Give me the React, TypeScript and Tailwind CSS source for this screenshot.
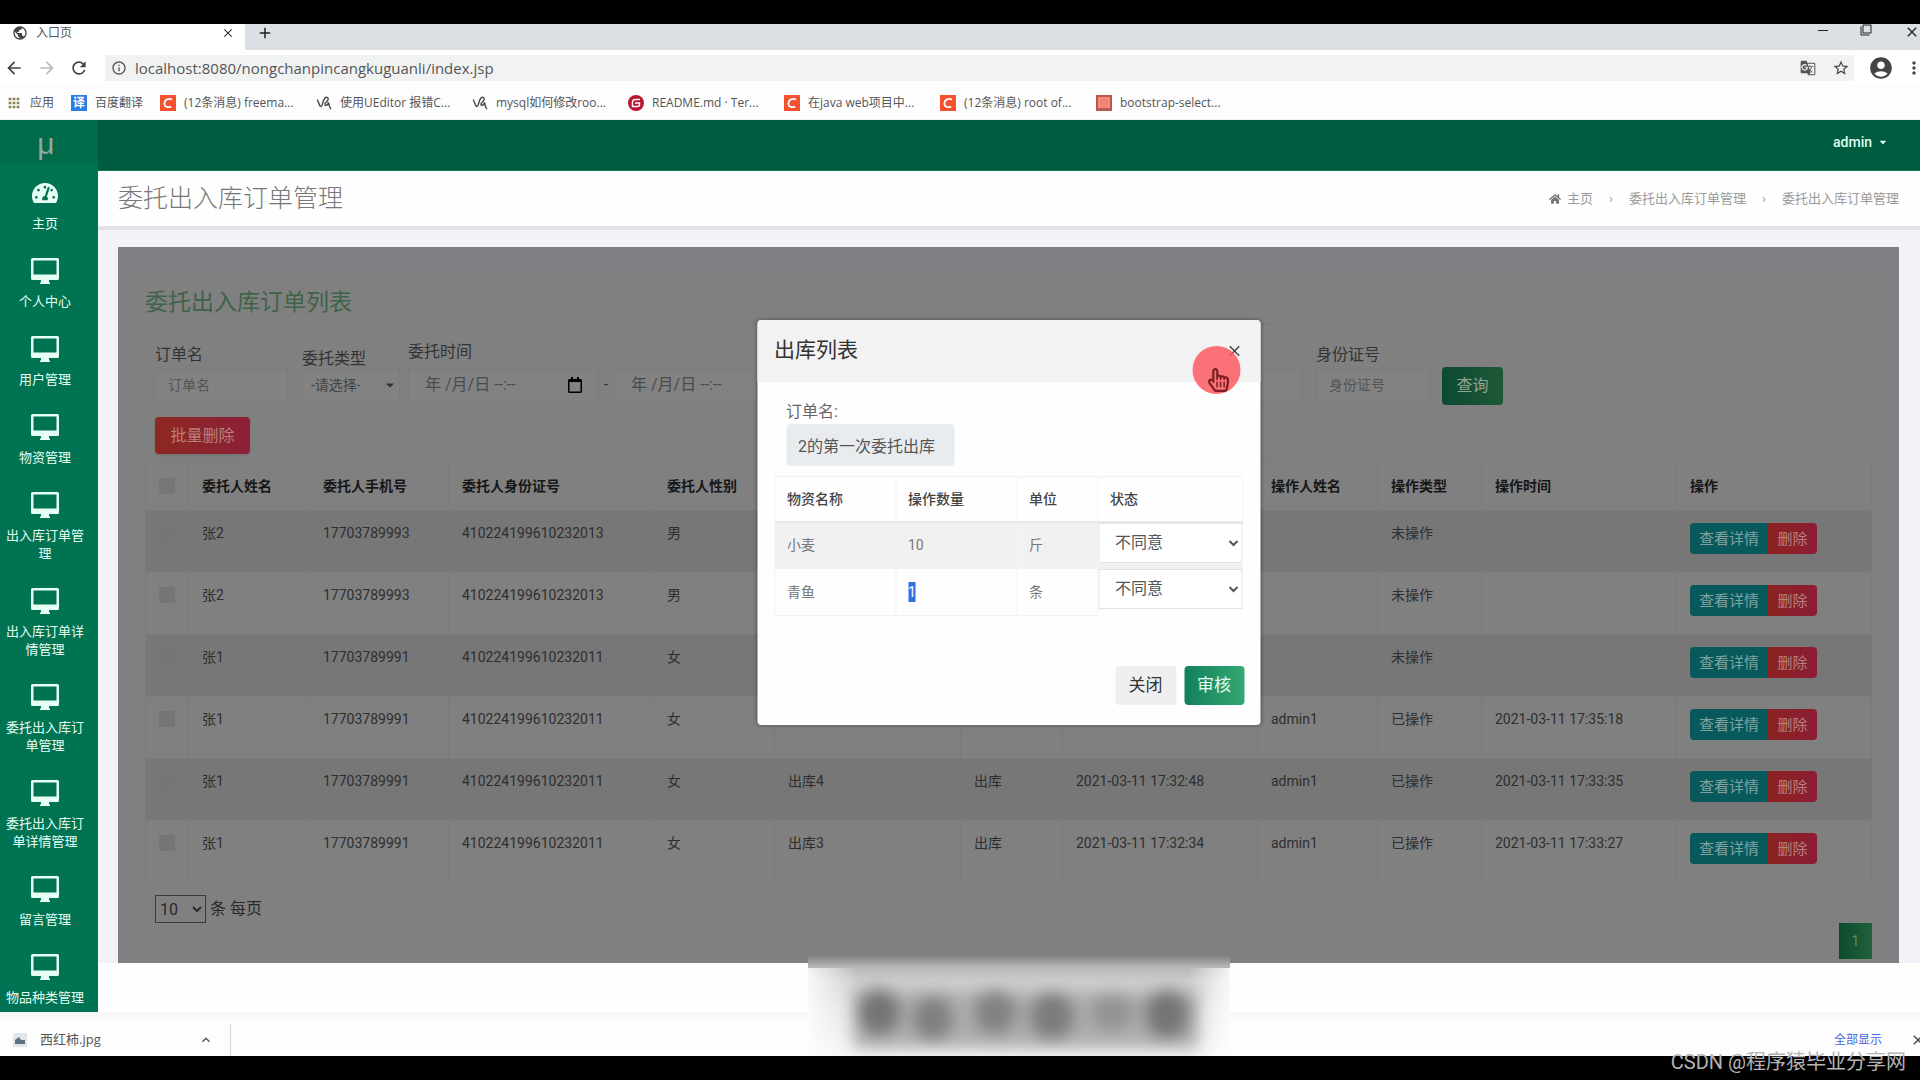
import React, { useState } from 'react';
import {
  MdAccountCircle,
  MdAdd,
  MdApps,
  MdArrowBack,
  MdArrowForward,
  MdClose,
  MdFilterNone,
  MdGTranslate,
  MdInfoOutline,
  MdKeyboardArrowUp,
  MdMoreVert,
  MdPublic,
  MdRefresh,
  MdStarBorder,
} from 'react-icons/md';
import { FaCaretDown, FaHome, FaRegCalendar, FaRegHandPointer, FaTachometerAlt } from 'react-icons/fa';

interface Order {
  id: number;
  name: string;
  phone: string;
  idCard: string;
  sex: string;
  order: string;
  type: string;
  time: string;
  operator: string;
  state: string;
  operateTime: string;
}

const orders: Order[] = [
  { id: 1, name: '张2', phone: '17703789993', idCard: '410224199610232013', sex: '男', order: '', type: '', time: '', operator: '', state: '未操作', operateTime: '' },
  { id: 2, name: '张2', phone: '17703789993', idCard: '410224199610232013', sex: '男', order: '', type: '', time: '', operator: '', state: '未操作', operateTime: '' },
  { id: 3, name: '张1', phone: '17703789991', idCard: '410224199610232011', sex: '女', order: '', type: '', time: '', operator: '', state: '未操作', operateTime: '' },
  { id: 4, name: '张1', phone: '17703789991', idCard: '410224199610232011', sex: '女', order: '', type: '', time: '', operator: 'admin1', state: '已操作', operateTime: '2021-03-11 17:35:18' },
  { id: 5, name: '张1', phone: '17703789991', idCard: '410224199610232011', sex: '女', order: '出库4', type: '出库', time: '2021-03-11 17:32:48', operator: 'admin1', state: '已操作', operateTime: '2021-03-11 17:33:35' },
  { id: 6, name: '张1', phone: '17703789991', idCard: '410224199610232011', sex: '女', order: '出库3', type: '出库', time: '2021-03-11 17:32:34', operator: 'admin1', state: '已操作', operateTime: '2021-03-11 17:33:27' },
];

const menus = [
  '个人中心',
  '用户管理',
  '物资管理',
  '出入库订单管理',
  '出入库订单详情管理',
  '委托出入库订单管理',
  '委托出入库订单详情管理',
  '留言管理',
  '物品种类管理',
];

const bookmarks = [
  { icon: 'yi', text: '百度翻译', width: 'w-[89px]' },
  { icon: 'csdn', text: '(12条消息) freema...', width: 'w-[156px]' },
  { icon: 'ue', text: '使用UEditor 报错C...', width: 'w-[156px]' },
  { icon: 'ue', text: 'mysql如何修改roo...', width: 'w-[156px]' },
  { icon: 'gitee', text: 'README.md · Ter...', width: 'w-[156px]' },
  { icon: 'csdn', text: '在java web项目中...', width: 'w-[156px]' },
  { icon: 'csdn', text: '(12条消息) root of...', width: 'w-[156px]' },
  { icon: 'bs', text: 'bootstrap-select...', width: 'w-[156px]' },
];

function MonitorIcon() {
  return (
    <svg viewBox="0 0 30 28" className="h-7 w-[30px]" aria-hidden="true">
      <path
        d="M2.5 1h25A1.500 1.500 0 0 1 29 2.500v19a1.500 1.500 0 0 1-1.500 1.500H19v2.500h1V27H10v-1.500h1V23H2.500A1.500 1.500 0 0 1 1 21.500v-19A1.500 1.500 0 0 1 2.500 1zM3.500 3.500v14h23v-14z"
        fill="#e6fff5"
        fillRule="evenodd"
      />
    </svg>
  );
}

function BookmarkIcon({ name }: { name: string }) {
  if (name === 'yi') {
    return <span className="flex h-4 w-4 items-center justify-center bg-[#2b7de0] text-xs font-bold text-white">译</span>;
  }
  if (name === 'csdn') {
    return (
      <svg viewBox="0 0 16 16" className="h-4 w-4" aria-hidden="true">
        <rect width="16" height="16" fill="#f5512f" />
        <path d="M12 4.6C8.6 2.9 4.6 4.6 4.4 8.2c-.1 3.6 3.4 4.8 6.8 3.4" fill="none" stroke="#fff" strokeWidth="1.8" />
      </svg>
    );
  }
  if (name === 'ue') {
    return (
      <svg viewBox="0 0 16 16" className="h-4 w-4" fill="none" stroke="#444" strokeWidth="1.4" aria-hidden="true">
        <path d="M1 4.5c1.5 1 2 7 4 7s1-5 4-8.500c1.500-1.500 4-.5 3 2S8.500 7.500 9 9.500s3 .5 3.500-2c.5 2 .5 4.500 2.500 6.500" />
      </svg>
    );
  }
  if (name === 'gitee') {
    return (
      <svg viewBox="0 0 16 16" className="h-4 w-4" aria-hidden="true">
        <circle cx="8" cy="8" r="8" fill="#b8152f" />
        <path d="M12 4.5H7A2.5 2.5 0 0 0 4.5 7v4.5h5a2 2 0 0 0 2-2V8H7" fill="none" stroke="#fff" strokeWidth="1.5" />
      </svg>
    );
  }
  return (
    <svg viewBox="0 0 16 16" className="h-4 w-4" aria-hidden="true">
      <rect width="16" height="16" fill="#b9564f" />
      <rect x="2" y="2" width="12" height="11" fill="#fb8e78" />
      <path d="M5 4v8M8 4v8M11 4v8" stroke="#e0705f" />
    </svg>
  );
}

function BrowserBar() {
  return (
    <div className="font-['Open_Sans','Noto_Sans_CJK_SC',sans-serif] text-[#555]">
      <div className="flex h-[26px] justify-between bg-[#dcdfe4]">
        <div className="flex">
          <div className="flex h-[26px] w-[245px] items-center bg-white pb-2 pl-3 pr-2.5">
            <MdPublic className="h-4 w-4 text-[#444]" />
            <span className="ml-2 flex-1 text-xs">入口页</span>
            <button type="button" aria-label="关闭标签页">
              <MdClose className="h-3.5 w-3.5 text-[#333]" />
            </button>
          </div>
          <button type="button" aria-label="新标签页" className="pb-2 pl-[11px]">
            <MdAdd className="h-[18px] w-[18px] text-[#222]" />
          </button>
        </div>
        <div className="flex items-start gap-8 text-[#222]">
          <button type="button" aria-label="最小化" className="mt-1.5 h-px w-2.5 bg-[#222]" />
          <button type="button" aria-label="还原" className="w-3">
            <MdFilterNone className="h-3 w-3" />
          </button>
          <button type="button" aria-label="关闭">
            <MdClose className="h-4 w-4" />
          </button>
        </div>
      </div>

      <div className="flex h-[34px] items-center bg-white pt-0.5">
        <button type="button" aria-label="后退" className="ml-1 w-[33px]">
          <MdArrowBack className="h-5 w-5 text-[#444]" />
        </button>
        <button type="button" aria-label="前进" className="w-8">
          <MdArrowForward className="h-5 w-5 text-[#bbb]" />
        </button>
        <button type="button" aria-label="刷新" className="w-9">
          <MdRefresh className="h-5 w-5 text-[#444]" />
        </button>
        <div className="flex h-[26px] flex-1 items-center bg-[#f1f3f3] pl-1.5">
          <MdInfoOutline className="h-4 w-4 text-[#555]" />
          <input
            aria-label="地址"
            readOnly
            value="localhost:8080/nongchanpincangkuguanli/index.jsp"
            className="ml-2 flex-1 bg-transparent text-[15px] outline-none"
          />
          <MdGTranslate className="mr-4 h-4 w-4 text-[#555]" />
          <MdStarBorder className="mr-1 h-[18px] w-[18px] text-[#444]" />
        </div>
        <MdAccountCircle className="ml-3.5 h-[26px] w-[26px] text-[#444]" />
        <MdMoreVert className="-mr-1 ml-2.5 h-5 w-5 text-[#444]" />
      </div>

      <div className="flex h-9 items-center border-b border-[#e8f6f0] bg-[#fdfdfd] pb-px pl-1.5 pt-1 text-xs">
        <a href="#apps" className="flex w-[65px] items-center gap-2">
          <MdApps className="h-4 w-4 text-[#8a8350]" />
          应用
        </a>
        {bookmarks.map((b) => (
          <a key={b.text} href="#bookmark" className={`flex items-center gap-2 whitespace-nowrap ${b.width}`}>
            <BookmarkIcon name={b.icon} />
            {b.text}
          </a>
        ))}
      </div>
    </div>
  );
}

function Sidebar() {
  return (
    <nav className="w-[98px] shrink-0 overflow-hidden bg-[#007352] text-[13px] leading-[18px] text-[#e6fff5]">
      <div className="flex h-[43px] items-center justify-center bg-[#006b4b] pr-1.5 pt-1 font-['Liberation_Sans',sans-serif] text-3xl text-[#8fa99f]">μ</div>
      <a href="#home" className="flex flex-col items-center pb-2 pr-2 pt-4">
        <FaTachometerAlt className="h-7 w-[26px]" />
        <span className="mt-2">主页</span>
      </a>
      {menus.map((m) => (
        <a key={m} href="#menu" className="flex flex-col items-center px-1 pb-2 pr-3 pt-4 text-center">
          <MonitorIcon />
          <span className="mt-2">{m}</span>
        </a>
      ))}
    </nav>
  );
}

const fieldClass = 'h-8 w-full border border-[#7c7c7c] bg-[#828282] pl-3 text-sm text-[#4a4a4a] placeholder:text-[#555] outline-none';

function DateField({ id, label }: { id: string; label: string }) {
  return (
    <div className="flex h-8 w-[190px] items-center border border-[#7c7c7c] bg-[#828282] pr-3.5">
      <input id={id} aria-label={label} defaultValue="年 /月/日 --:--" className="w-0 flex-1 bg-transparent pl-4 text-base text-[#4a4a4a] outline-none" />
      <FaRegCalendar className="h-4 w-4 text-black" />
    </div>
  );
}

function SearchForm() {
  return (
    <form className="flex items-end px-2.5 text-base text-[#333]" onSubmit={(e) => e.preventDefault()}>
      <div className="w-[133px]">
        <label htmlFor="orderName" className="block leading-7">订单名</label>
        <input id="orderName" placeholder="订单名" className={fieldClass} />
      </div>
      <div className="ml-3.5 w-[98px]">
        <label htmlFor="orderType" className="block leading-5">委托类型</label>
        <div className="relative">
          <select id="orderType" className="h-8 w-full appearance-none border border-[#7c7c7c] bg-[#828282] pl-2 text-sm text-[#444] outline-none">
            <option>-请选择-</option>
          </select>
          <FaCaretDown className="pointer-events-none absolute right-1 top-2.5 h-3 w-3 text-[#333]" />
        </div>
      </div>
      <div className="ml-2">
        <label htmlFor="timeStart" className="block leading-[34px]">委托时间</label>
        <div className="flex items-center">
          <DateField id="timeStart" label="委托时间" />
          <span className="w-4 text-center">-</span>
          <DateField id="timeEnd" label="结束时间" />
        </div>
      </div>
      <div className="ml-3 w-[486px]">
        <input aria-label="委托人姓名" className={fieldClass} />
      </div>
      <div className="ml-3.5 w-[114px]">
        <label htmlFor="idCard" className="block leading-7">身份证号</label>
        <input id="idCard" placeholder="身份证号" className={fieldClass} />
      </div>
      <button type="submit" className="-mb-1 ml-3 h-[38px] w-[61px] rounded-sm bg-gradient-to-r from-[#0c4a33] to-[#1d5836] text-base text-[#8fa496]">
        查询
      </button>
    </form>
  );
}

function OrderTable() {
  const cell = 'border-x border-[#7a7a7a] px-[13px]';
  return (
    <table className="w-full table-fixed border-collapse text-left text-sm text-[#2e2e2e]">
      <colgroup>
        <col className="w-[43px]" />
        <col className="w-[121px]" />
        <col className="w-[139px]" />
        <col className="w-[205px]" />
        <col className="w-[121px]" />
        <col className="w-[186px]" />
        <col className="w-[102px]" />
        <col className="w-[195px]" />
        <col className="w-[120px]" />
        <col className="w-[104px]" />
        <col className="w-[195px]" />
        <col />
      </colgroup>
      <thead>
        <tr className="h-[50px] border-y border-[#7a7a7a] text-[#161616]">
          <th className={cell}>
            <input type="checkbox" aria-label="全选" className="block h-4 w-4 appearance-none bg-[#767676]" />
          </th>
          <th className={cell}>委托人姓名</th>
          <th className={cell}>委托人手机号</th>
          <th className={cell}>委托人身份证号</th>
          <th className={cell}>委托人性别</th>
          <th className={cell} />
          <th className={cell} />
          <th className={cell} />
          <th className={cell}>操作人姓名</th>
          <th className={cell}>操作类型</th>
          <th className={cell}>操作时间</th>
          <th className={cell}>操作</th>
        </tr>
      </thead>
      <tbody>
        {orders.map((o) => (
          <tr key={o.id} className="h-[62px] border-b border-[#7c7c7c] align-top leading-5 odd:bg-[#777777] [&>td]:pt-3">
            <td className={cell}>
              <input type="checkbox" aria-label={`选择 ${o.name}`} className="mt-0.5 block h-4 w-4 appearance-none bg-[#757575]" />
            </td>
            <td className={cell}>{o.name}</td>
            <td className={cell}>{o.phone}</td>
            <td className={cell}>{o.idCard}</td>
            <td className={cell}>{o.sex}</td>
            <td className={cell}>{o.order}</td>
            <td className={cell}>{o.type}</td>
            <td className={cell}>{o.time}</td>
            <td className={cell}>{o.operator}</td>
            <td className={cell}>{o.state}</td>
            <td className={cell}>{o.operateTime}</td>
            <td className={cell}>
              <div className="flex text-[15px] text-[#83a3a3]">
                <button type="button" className="h-[31px] w-[78px] rounded-l-sm bg-[#08595b]">查看详情</button>
                <button type="button" className="h-[31px] w-[49px] rounded-r-sm bg-gradient-to-r from-[#8a2320] to-[#8c1c35] text-[#b58080]">删除</button>
              </div>
            </td>
          </tr>
        ))}
      </tbody>
    </table>
  );
}

function StateSelect({ label }: { label: string }) {
  return (
    <select aria-label={label} className="block h-[40px] w-full border border-[#e2e2e2] bg-white pl-3 text-base text-[#555] outline-none">
      <option>不同意</option>
      <option>同意</option>
    </select>
  );
}

function OutboundModal({ onClose }: { onClose: () => void }) {
  const cell = 'border border-[#f3f3f3] pl-3';
  return (
    <div
      role="dialog"
      aria-labelledby="modalTitle"
      className="absolute left-1/2 top-[49px] h-[405px] w-[503px] -translate-x-1/2 rounded bg-[#fefefe] shadow-[0_0_4px_rgba(0,0,0,0.4)]"
    >
      <div className="flex h-[62px] items-center justify-between rounded-t bg-[#f2f2f2] pl-[17px] pr-[17px]">
        <h4 id="modalTitle" className="text-[21px] text-[#333]">出库列表</h4>
        <button type="button" aria-label="关闭" onClick={onClose}>
          <MdClose className="h-[18px] w-[18px] text-[#444]" />
        </button>
      </div>
      {/* click highlight and pointer */}
      <div className="pointer-events-none absolute left-[435px] top-[26px] flex h-12 w-12 items-center justify-center rounded-full bg-[#fc5c62]/85">
        <FaRegHandPointer className="ml-1 mt-5 h-6 w-6 text-[#7d1f22]" />
      </div>

      <div className="px-[17px] pt-[18px]">
        <div className="pl-3">
          <label htmlFor="modalOrder" className="block text-base leading-6 text-[#666]">订单名:</label>
          <input
            id="modalOrder"
            readOnly
            value="2的第一次委托出库"
            className="block h-[42px] w-[168px] rounded-sm bg-[#e9ecef] pl-3 text-base text-[#555] outline-none"
          />
        </div>
        <table className="mt-2.5 w-full table-fixed border-collapse text-left text-sm text-[#777]">
          <colgroup>
            <col className="w-[121px]" />
            <col className="w-[121px]" />
            <col className="w-[81px]" />
            <col />
          </colgroup>
          <thead>
            <tr className="h-[45px] border-b-2 border-[#eaeaea] text-[#444]">
              <th className={`${cell} font-medium`}>物资名称</th>
              <th className={`${cell} font-medium`}>操作数量</th>
              <th className={`${cell} font-medium`}>单位</th>
              <th className={`${cell} font-medium`}>状态</th>
            </tr>
          </thead>
          <tbody>
            <tr className="h-[47px] bg-[#f1f1f1]">
              <td className={cell}>小麦</td>
              <td className={cell}>10</td>
              <td className={cell}>斤</td>
              <td className="p-0 align-top">
                <StateSelect label="小麦状态" />
              </td>
            </tr>
            <tr className="h-[47px]">
              <td className={cell}>青鱼</td>
              <td className={cell}>
                <span className="bg-[#2f6fe8] py-0.5 text-white">1</span>
              </td>
              <td className={cell}>条</td>
              <td className="p-0 align-top">
                <StateSelect label="青鱼状态" />
              </td>
            </tr>
          </tbody>
        </table>
      </div>

      <div className="mt-[50px] flex justify-end gap-2 pr-4 text-[17px]">
        <button type="button" onClick={onClose} className="h-[39px] w-[61px] rounded-sm bg-[#efeff0] text-[#333]">
          关闭
        </button>
        <button type="button" className="h-[39px] w-[60px] rounded bg-gradient-to-r from-[#11805c] to-[#34a872] text-[#e2fbef]">
          审核
        </button>
      </div>
    </div>
  );
}

/* Blurred caption floating above the page footer */
function Caption() {
  return (
    <svg viewBox="0 0 422 100" className="pointer-events-none absolute bottom-6 left-[808px] h-[100px] w-[422px]" aria-hidden="true">
      <defs>
        <linearGradient id="capBg" x1="0" y1="0" x2="0" y2="1">
          <stop offset="0" stopColor="#828282" />
          <stop offset="0.1" stopColor="#b4b4b4" />
          <stop offset="0.25" stopColor="#cfcfcf" />
          <stop offset="0.5" stopColor="#dedede" />
          <stop offset="1" stopColor="#f4f4f4" />
        </linearGradient>
        <linearGradient id="capSide">
          <stop offset="0" stopColor="#fff" stopOpacity="0.85" />
          <stop offset="0.12" stopColor="#fff" stopOpacity="0" />
          <stop offset="0.9" stopColor="#fff" stopOpacity="0" />
          <stop offset="1" stopColor="#fff" stopOpacity="0.85" />
        </linearGradient>
        <filter id="capBlur" x="-20%" y="-40%" width="140%" height="180%">
          <feGaussianBlur stdDeviation="8" />
        </filter>
      </defs>
      <rect width="422" height="100" fill="url(#capBg)" />
      <rect y="12" width="422" height="88" fill="url(#capSide)" />
      <g filter="url(#capBlur)">
        <rect x="46" y="34" width="344" height="58" fill="#aeaeae" />
        <ellipse cx="71" cy="56" rx="22" ry="24" fill="#747474" />
        <ellipse cx="125" cy="62" rx="21" ry="23" fill="#808080" />
        <ellipse cx="187" cy="56" rx="22" ry="23" fill="#828282" />
        <ellipse cx="244" cy="60" rx="23" ry="24" fill="#7c7c7c" />
        <ellipse cx="304" cy="56" rx="22" ry="18" fill="#929292" />
        <ellipse cx="359" cy="58" rx="23" ry="25" fill="#747474" />
      </g>
    </svg>
  );
}

function DownloadBar() {
  return (
    <div className="flex h-[44px] items-center justify-between border-t-[5px] border-[#f7f7f7] bg-[#fdfdfd] font-['Open_Sans','Noto_Sans_CJK_SC',sans-serif] text-[13px] text-[#555]">
      <div className="mt-1.5 flex h-8 w-[231px] items-center border-r border-[#d5d5d5] pl-3 pr-4">
        <svg viewBox="0 0 16 16" className="h-4 w-4" aria-hidden="true">
          <path d="M3 1h12v14H1V4z" fill="#dfe6ea" />
          <path d="M3 12V8l4-3 2 3h4v4z" fill="#5c7283" />
        </svg>
        <span className="ml-3 flex-1">西红柿.jpg</span>
        <MdKeyboardArrowUp className="h-4 w-4" />
      </div>
      <div className="mt-1.5 flex items-center">
        <a href="#downloads" className="mr-7 text-xs text-[#4368d8]">全部显示</a>
        <MdClose className="-mr-1.5 h-4 w-4 text-[#444]" />
      </div>
    </div>
  );
}

export default function App() {
  const [modalOpen, setModalOpen] = useState(true);

  return (
    <div className="relative flex min-h-screen flex-col overflow-hidden bg-black py-6 font-['Roboto','Noto_Sans_CJK_SC',sans-serif]">
      <BrowserBar />

      <div className="flex h-[892px]">
        <Sidebar />
        <div className="flex min-w-0 flex-1 flex-col bg-[#fefefe]">
          <header className="flex h-[51px] shrink-0 items-center justify-end border-b border-[#0a7a58] bg-[#005c41] pb-1.5 pr-8">
            <button type="button" className="flex items-center gap-1.5 text-sm font-medium text-[#dcfff0]">
              admin
              <FaCaretDown className="h-2.5 w-2.5" />
            </button>
          </header>

          <div className="flex h-[59px] shrink-0 items-center justify-between border-b-4 border-[#e1e1e8] bg-[#fefefe] pl-5 pr-[21px]">
            <h1 className="text-[25px] font-light text-[#777]">委托出入库订单管理</h1>
            <nav aria-label="面包屑" className="flex items-center text-[13px] text-[#999]">
              <FaHome className="mr-1.5 h-3 w-3 text-[#777]" />
              <a href="#home">主页</a>
              <span className="w-9 text-center">›</span>
              <a href="#orders">委托出入库订单管理</a>
              <span className="w-9 text-center">›</span>
              <span>委托出入库订单管理</span>
            </nav>
          </div>

          <div className="bg-[#f2f2f8] pl-5 pr-[21px] pt-[17px]">
            <section className="relative h-[716px] border-[10px] border-b-2 border-t-[24px] border-[#7e7e83] bg-[#808080] px-[17px]">
              <h2 className="h-[54px] border-b-2 border-[#7d7d7d] pt-4 text-[23px] leading-8 text-[#3f6349]">委托出入库订单列表</h2>
              <div className="pt-2.5">
                <SearchForm />
              </div>
              <button type="button" className="ml-2.5 mt-4 block h-[37px] w-[95px] rounded-sm bg-gradient-to-r from-[#8c2820] to-[#8c2038] text-base text-[#b98078] shadow-sm">
                批量删除
              </button>
              <div className="mt-1.5">
                <OrderTable />
              </div>
              <div className="mt-3 flex items-start justify-between pl-2.5 text-base text-[#2a2a2a]">
                <label className="flex items-center gap-1">
                  <select className="h-7 w-[51px] border border-[#3a3a3a] bg-[#808080] text-base">
                    <option>10</option>
                  </select>
                  条 每页
                </label>
                <button type="button" className="mt-7 h-9 w-[33px] bg-gradient-to-r from-[#0c4a2f] to-[#20613a] text-sm text-[#5b8a68]">1</button>
              </div>
              {modalOpen && <OutboundModal onClose={() => setModalOpen(false)} />}
            </section>
          </div>
        </div>
      </div>

      <DownloadBar />
      <Caption />
      <div className="absolute bottom-0.5 right-3.5 text-xl leading-8 text-[#b4b4b4]">CSDN @程序猿毕业分享网</div>
    </div>
  );
}
